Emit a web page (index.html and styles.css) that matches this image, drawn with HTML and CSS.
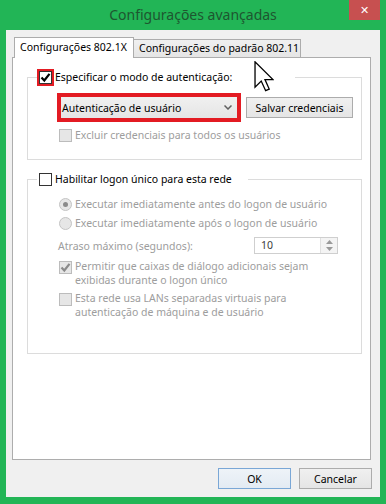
FILE: index.html
```html
<!DOCTYPE html>
<html lang="pt-BR">
<head>
    <meta charset="UTF-8">
    <meta name="viewport" content="width=device-width, initial-scale=1.0">
    <title>Configurações avançadas</title>
    <link rel="stylesheet" href="styles.css">
</head>
<body>
    <div class="window">
        <div class="titlebar">
            <span></span>
            <h1>Configurações avançadas</h1>
            <button class="close">&#x2715;</button>
        </div>

        <div class="client">
            <div class="tabs">
                <div class="tab active">Configurações 802.1X</div>
                <div class="tab">Configurações do padrão 802.11</div>
            </div>

            <div class="panel">
                <fieldset class="group group-auth">
                    <legend class="legend-auth">
                        <span class="box checked marked">
                            <svg viewBox="0 0 11 11"><path d="M1.5 5.5 L4.3 8.5 L9.5 1.8" /></svg>
                        </span>
                        <span>Especificar o modo de autenticação:</span>
                    </legend>

                    <div class="combo-row">
                        <div class="combo marked">
                            <span>Autenticação de usuário</span>
                            <svg class="chevron" viewBox="0 0 8 5"><path d="M0.5 0.5 L4 4 L7.5 0.5" /></svg>
                        </div>
                        <button class="btn save">Salvar credenciais</button>
                    </div>

                    <div class="row disabled">
                        <span class="box"></span>
                        <span>Excluir credenciais para todos os usuários</span>
                    </div>
                </fieldset>

                <fieldset class="group group-sso">
                    <legend class="legend-sso">
                        <span class="box dark"></span>
                        <span>Habilitar logon único para esta rede</span>
                    </legend>

                    <div class="row disabled radio-first">
                        <span class="radio on"></span>
                        <span>Executar imediatamente antes do logon de usuário</span>
                    </div>
                    <div class="row disabled">
                        <span class="radio"></span>
                        <span>Executar imediatamente após o logon de usuário</span>
                    </div>
                    <div class="row disabled delay-row">
                        <span class="delay-label">Atraso máximo (segundos):</span>
                        <div class="spin">
                            <span class="spin-value">10</span>
                            <div class="spin-arrows">
                                <svg viewBox="0 0 7 4"><path d="M0 4 L3.5 0 L7 4 Z" /></svg>
                                <svg viewBox="0 0 7 4"><path d="M0 0 L3.5 4 L7 0 Z" /></svg>
                            </div>
                        </div>
                    </div>
                    <div class="row disabled multi">
                        <span class="box gray-check">
                            <svg viewBox="0 0 11 11"><path d="M1.5 5.5 L4.3 8.5 L9.5 1.8" /></svg>
                        </span>
                        <span>Permitir que caixas de diálogo adicionais sejam<br>exibidas durante o logon único</span>
                    </div>
                    <div class="row disabled multi">
                        <span class="box"></span>
                        <span>Esta rede usa LANs separadas virtuais para<br>autenticação de máquina e de usuário</span>
                    </div>
                </fieldset>
            </div>

            <div class="actions">
                <button class="btn default">OK</button>
                <button class="btn">Cancelar</button>
            </div>
        </div>

        <!-- mouse pointer captured in the screenshot -->
        <svg class="cursor" viewBox="0 0 12 19">
            <path d="M0.5 0.5 L0.5 16 L4.3 12.3 L7 18.2 L9.2 17.2 L6.6 11.4 L11.5 11.4 Z" />
        </svg>
    </div>
</body>
</html>
```

FILE: styles.css
```css
* {
    box-sizing: border-box;
}

body {
    margin: 0;
    font-family: 'Noto Sans', 'Open Sans', sans-serif;
    font-size: 10.5px;
    color: #000;
    background: #22b556;
}

.window {
    position: relative;
    width: 386px;
    height: 504px;
    display: flex;
    flex-direction: column;
    background: #22b556;
}

.titlebar {
    height: 30px;
    display: grid;
    grid-template-columns: 1fr auto 1fr;
    align-items: start;
}

.titlebar h1 {
    margin: 0;
    padding-top: 5px;
    font-size: 14px;
    font-weight: normal;
    color: #1e5630;
    line-height: 20px;
}

.close {
    justify-self: end;
    width: 31px;
    height: 20px;
    margin-right: 6px;
    border: none;
    padding: 0;
    background: #c75050;
    color: #fff;
    font-size: 11px;
    font-weight: bold;
    font-family: 'DejaVu Sans', sans-serif;
}

.client {
    flex: 1;
    margin: 0 6px 7px 6px;
    padding: 7px 9px 8px 6px;
    background: #f0f0f0;
    display: flex;
    flex-direction: column;
}

/* tabs */

.tabs {
    display: flex;
    align-items: flex-end;
    height: 20px;
    padding-left: 2px;
    position: relative;
    z-index: 1;
}

.tab {
    height: 18px;
    width: 168px;
    padding-left: 5px;
    line-height: 16px;
    border: 1px solid #acacac;
    border-bottom: none;
    background: linear-gradient(#f0f0f0, #e5e5e5);
    margin-left: -1px;
    white-space: nowrap;
}

.tab.active {
    height: 21px;
    width: 120px;
    margin-left: 0;
    margin-bottom: -1px;
    line-height: 18px;
    background: #fff;
    border-right: 1px solid #acacac;
    position: relative;
    z-index: 2;
}

.panel {
    flex: 1;
    background: #fff;
    border: 1px solid #adadad;
    padding: 11px 8px 0 14px;
}

/* group boxes */

.group {
    margin: 0;
    border: 1px solid #dcdcdc;
    padding: 0 0 0 31px;
}

.group-auth {
    height: 91px;
}

.group-sso {
    margin-top: 11px;
    height: 183px;
}

.group legend {
    display: flex;
    align-items: center;
    gap: 3px;
    height: 16px;
    padding: 0 0 0 2px;
    margin-left: -22px;
    white-space: nowrap;
}

.legend-auth {
    width: 258px;
}

.legend-sso {
    width: 211px;
}

.box {
    flex: none;
    width: 13px;
    height: 13px;
    border: 1px solid #bcbcbc;
    background: #e6e6e6;
    display: flex;
    align-items: center;
    justify-content: center;
}

.box svg {
    width: 11px;
    height: 11px;
    fill: none;
    stroke-width: 2.2;
}

.box.checked {
    background: #fff;
    border: 1px solid #333;
}

.box.checked svg {
    stroke: #000;
}

.box.dark {
    background: #fff;
    border: 1px solid #333;
}

.box.gray-check svg {
    stroke: #8a8a8a;
}

.marked {
    outline: 2px solid #e31b23;
}

.combo-row {
    display: flex;
    align-items: center;
    gap: 9px;
    margin-top: 12px;
    padding-left: 2px;
}

.combo {
    width: 176px;
    height: 21px;
    outline-width: 4px;
    background: linear-gradient(#f0f0f0, #e5e5e5);
    display: flex;
    align-items: center;
    justify-content: space-between;
    padding: 0 5px 0 1px;
}

.chevron {
    width: 8px;
    height: 5px;
    fill: none;
    stroke: #606060;
    stroke-width: 1.5;
}

.btn {
    height: 21px;
    border: 1px solid #acacac;
    background: linear-gradient(#f0f0f0, #e5e5e5);
    font-family: inherit;
    font-size: 10.5px;
    color: #000;
    padding: 0;
}

.save {
    width: 107px;
}

.row {
    display: flex;
    align-items: center;
    gap: 3px;
    height: 16px;
    margin-top: 3px;
    white-space: nowrap;
}

.group-auth .row {
    margin-top: 9px;
}

.disabled {
    color: #9d9d9d;
}

.radio-first {
    margin-top: 9px;
}

.radio {
    flex: none;
    width: 13px;
    height: 13px;
    border-radius: 50%;
    border: 1px solid #c4c4c4;
    background: #e6e6e6;
    display: flex;
    align-items: center;
    justify-content: center;
}

.radio.on::after {
    content: "";
    width: 5px;
    height: 5px;
    border-radius: 50%;
    background: #8a8a8a;
}

.delay-row {
    height: 17px;
    margin-top: 6px;
    justify-content: space-between;
    padding-right: 23px;
}

.delay-label {
    margin-left: -1px;
}

.spin {
    width: 84px;
    height: 17px;
    border: 1px solid #cfcfcf;
    display: flex;
    justify-content: space-between;
}

.spin-value {
    padding-left: 6px;
    color: #3c3c3c;
    line-height: 15px;
}

.spin-arrows {
    width: 17px;
    border-left: 1px solid #e0e0e0;
    display: flex;
    flex-direction: column;
    justify-content: space-evenly;
    align-items: center;
    background: #f4f4f4;
}

.spin-arrows svg {
    width: 7px;
    height: 4px;
    fill: #9a9a9a;
}

.multi {
    height: auto;
    align-items: flex-start;
    line-height: 13.5px;
    margin-top: 6px;
}

.multi .box {
    margin-top: 1px;
}

.multi + .multi {
    margin-top: 5px;
}

/* dialog buttons */

.actions {
    display: flex;
    justify-content: flex-end;
    gap: 8px;
    margin-top: 8px;
    margin-right: -1px;
}

.actions .btn {
    width: 73px;
}

.actions .btn.default {
    border-color: #7aa7d6;
    background: linear-gradient(#eef3f8, #e3ebf3);
}

.cursor {
    position: absolute;
    left: 254px;
    top: 61px;
    width: 20px;
    height: 31px;
    fill: #fff;
    stroke: #000;
    stroke-width: 0.8;
}
```
